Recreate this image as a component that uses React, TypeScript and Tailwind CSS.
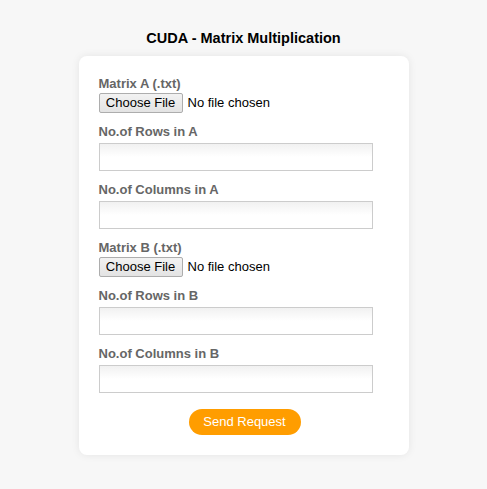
import React from "react"

const FileField = ({ label }: { label: string }) => (
  <div className="mb-[11px]">
    <div className="mb-px text-[13px] leading-4 font-bold text-[#666]">{label}</div>
    <div className="flex items-center">
      <div className="flex h-[20px] w-[84px] items-center justify-center rounded-[2px] border border-[#adadad] bg-gradient-to-b from-[#f2f2f2] to-[#e3e3e3] text-[13px] text-black">
        Choose File
      </div>
      <span className="ml-[5px] text-[13px] text-black">No file chosen</span>
    </div>
  </div>
)

const TextField = ({ label }: { label: string }) => (
  <div className="mb-[11px]">
    <div className="mb-[3px] text-[13px] leading-4 font-bold text-[#666]">{label}</div>
    <input
      type="text"
      className="block h-[28px] w-[274px] border border-[#cccccc] bg-gradient-to-b from-[#f1f1f1] via-white to-white px-2 text-[13px] outline-none"
    />
  </div>
)

export default function App() {
  return (
    <div
      className="flex min-h-[489px] flex-col items-center bg-[#f7f7f7] pt-[30px]"
      style={{ fontFamily: '"Liberation Sans", Arial, sans-serif' }}
    >
      <h1 className="mb-[9px] text-[14.5px] leading-[17px] font-bold text-black">CUDA - Matrix Multiplication</h1>
      <div className="w-[330px] rounded-[8px] bg-white px-5 pt-5 pb-5 shadow-[0_0_8px_rgba(0,0,0,0.08)]">
        <FileField label="Matrix A (.txt)" />
        <TextField label="No.of Rows in A" />
        <TextField label="No.of Columns in A" />
        <FileField label="Matrix B (.txt)" />
        <TextField label="No.of Rows in B" />
        <TextField label="No.of Columns in B" />
        <div className="flex justify-center pt-[5px] pl-[2px]">
          <button className="h-[26px] w-[112px] rounded-full bg-[#ff9d00] text-[13px] text-white">Send Request</button>
        </div>
      </div>
    </div>
  )
}
